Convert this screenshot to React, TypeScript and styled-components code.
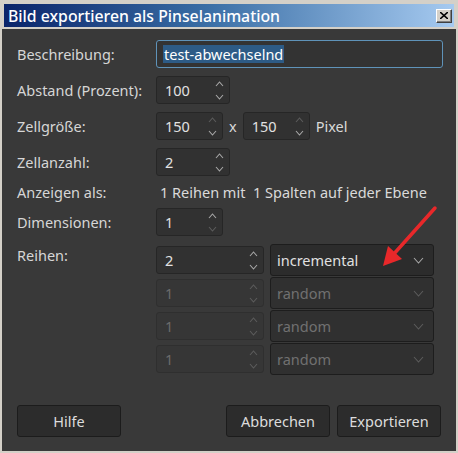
import styled, { createGlobalStyle } from 'styled-components';

const GlobalStyle = createGlobalStyle`
  html, body {
    margin: 0;
    padding: 0;
    background: #d4d0c8;
  }
  body {
    font-family: "Noto Sans", "Open Sans", sans-serif;
  }
`;

const Window = styled.div`
  position: relative;
  width: 458px;
  height: 453px;
  box-sizing: border-box;
  background: #d4d0c8;
  padding: 3px 2px 2px;
  display: flex;
  flex-direction: column;
`;

const TitleBar = styled.div`
  height: 23px;
  margin: 1px 2px 0;
  background: linear-gradient(to right, #0a246a 0%, #3a6ea5 45%, #a6caf0 100%);
  display: flex;
  align-items: center;
  justify-content: space-between;
  padding: 0 2px 0 4px;
`;

const Title = styled.span`
  color: #ffffff;
  font-size: 15.8px;
  font-weight: 500;
`;

const CloseButton = styled.div`
  width: 16px;
  height: 14px;
  box-sizing: border-box;
  background: #d4d0c8;
  border: 1px solid;
  border-color: #ffffff #404040 #404040 #ffffff;
  box-shadow: inset -1px -1px 0 #808080;
  display: flex;
  align-items: center;
  justify-content: center;
`;

const Body = styled.div`
  flex: 1;
  margin-top: 2px;
  background: #393939;
  display: flex;
  flex-direction: column;
  padding: 11px 15px 14px 15px;
  color: #dadada;
  font-size: 14.5px;
`;

const Form = styled.div`
  display: grid;
  grid-template-columns: 139px 1fr;
  row-gap: 8px;
  align-items: center;
`;

const Label = styled.div<{ $top?: boolean; $tight?: boolean }>`
  color: #d6d6d6;
  align-self: ${({ $top }) => ($top ? 'start' : 'center')};
  padding-top: ${({ $top }) => ($top ? '1px' : '0')};
  line-height: ${({ $tight }) => ($tight ? '16px' : 'normal')};
  white-space: nowrap;
`;

const Line = styled.div`
  display: flex;
  align-items: center;
  gap: 6px;
`;

const InfoText = styled.div`
  line-height: 16px;
  padding-left: 4px;
  white-space: pre;
`;

const TextInput = styled.div`
  height: 28px;
  box-sizing: border-box;
  width: 287px;
  border: 1px solid #5f93b9;
  border-radius: 3px;
  background: #333333;
  display: flex;
  align-items: center;
  padding-left: 6px;
`;

const Selected = styled.span`
  background: #2d5b86;
  color: #ffffff;
  padding: 0 1px;
  line-height: 18px;
`;

const Spin = styled.div<{ $w: number; $disabled?: boolean }>`
  width: ${({ $w }) => $w}px;
  height: 28px;
  box-sizing: border-box;
  border: 1px solid ${({ $disabled }) => ($disabled ? '#2f2f2f' : '#262626')};
  border-radius: 3px;
  background: ${({ $disabled }) => ($disabled ? '#363636' : '#313131')};
  color: ${({ $disabled }) => ($disabled ? '#6c6c6c' : '#e2e2e2')};
  display: flex;
  align-items: center;
  justify-content: space-between;
  padding: 0 5px 0 8px;
`;

const Arrows = styled.div`
  display: flex;
  flex-direction: column;
  gap: 7px;
`;

const Combo = styled.div<{ $disabled?: boolean }>`
  width: 164px;
  height: 32px;
  box-sizing: border-box;
  border: 1px solid #1d1d1d;
  border-radius: 3px;
  background: ${({ $disabled }) => ($disabled ? '#303030' : '#2c2c2c')};
  color: ${({ $disabled }) => ($disabled ? '#707070' : '#e0e0e0')};
  display: flex;
  align-items: center;
  justify-content: space-between;
  padding: 0 9px 0 6px;
`;

const RowsList = styled.div`
  display: flex;
  flex-direction: column;
  gap: 1px;
`;

const RowLine = styled.div`
  display: flex;
  align-items: center;
  gap: 6px;
`;

const Footer = styled.div`
  margin-top: auto;
  display: flex;
  gap: 7px;
`;

const Button = styled.div`
  width: 104px;
  height: 32px;
  box-sizing: border-box;
  background: #2c2c2c;
  border: 1px solid #1c1c1c;
  border-radius: 3px;
  color: #dcdcdc;
  display: flex;
  align-items: center;
  justify-content: center;
`;

const Spacer = styled.div`
  flex: 1;
`;

const Overlay = styled.svg`
  position: absolute;
  left: 0;
  top: 0;
  pointer-events: none;
`;

function Chevron({ up, dim, w = 7 }: { up?: boolean; dim?: boolean; w?: number }) {
  const h = Math.round(w * 0.55);
  return (
    <svg width={w + 2} height={h + 2} viewBox={`-1 -1 ${w + 2} ${h + 2}`}>
      <path
        d={up ? `M0 ${h} L${w / 2} 0 L${w} ${h}` : `M0 0 L${w / 2} ${h} L${w} 0`}
        fill="none"
        stroke={dim ? '#5c5c5c' : '#a8a8a8'}
        strokeWidth="1.1"
      />
    </svg>
  );
}

function SpinBox({
  value,
  width,
  disabled,
  upDim,
  downDim,
}: {
  value: string;
  width: number;
  disabled?: boolean;
  upDim?: boolean;
  downDim?: boolean;
}) {
  return (
    <Spin $w={width} $disabled={disabled}>
      <span>{value}</span>
      <Arrows>
        <Chevron up dim={disabled || upDim} />
        <Chevron dim={disabled || downDim} />
      </Arrows>
    </Spin>
  );
}

function ComboBox({ value, disabled }: { value: string; disabled?: boolean }) {
  return (
    <Combo $disabled={disabled}>
      <span>{value}</span>
      <Chevron w={9} dim={disabled} />
    </Combo>
  );
}

export default function App() {
  return (
    <Window>
      <GlobalStyle />
      <TitleBar>
        <Title>Bild exportieren als Pinselanimation</Title>
        <CloseButton>
          <svg width="8" height="7" viewBox="0 0 8 7">
            <path d="M0 0 L8 7 M8 0 L0 7" stroke="#000" strokeWidth="1.6" />
          </svg>
        </CloseButton>
      </TitleBar>
      <Body>
        <Form>
          <Label>Beschreibung:</Label>
          <TextInput>
            <Selected>test-abwechselnd</Selected>
          </TextInput>

          <Label>Abstand (Prozent):</Label>
          <Line>
            <SpinBox value="100" width={74} />
          </Line>

          <Label>Zellgröße:</Label>
          <Line>
            <SpinBox value="150" width={67} upDim />
            <span>x</span>
            <SpinBox value="150" width={67} upDim />
            <span>Pixel</span>
          </Line>

          <Label>Zellanzahl:</Label>
          <Line>
            <SpinBox value="2" width={74} />
          </Line>

          <Label $tight>Anzeigen als:</Label>
          <InfoText>1 Reihen mit  1 Spalten auf jeder Ebene</InfoText>

          <Label>Dimensionen:</Label>
          <Line>
            <SpinBox value="1" width={67} downDim />
          </Line>

          <Label $top>Reihen:</Label>
          <RowsList>
            <RowLine>
              <SpinBox value="2" width={108} />
              <ComboBox value="incremental" />
            </RowLine>
            <RowLine>
              <SpinBox value="1" width={108} disabled />
              <ComboBox value="random" disabled />
            </RowLine>
            <RowLine>
              <SpinBox value="1" width={108} disabled />
              <ComboBox value="random" disabled />
            </RowLine>
            <RowLine>
              <SpinBox value="1" width={108} disabled />
              <ComboBox value="random" disabled />
            </RowLine>
          </RowsList>
        </Form>
        <Footer>
          <Button>Hilfe</Button>
          <Spacer />
          <Button>Abbrechen</Button>
          <Button>Exportieren</Button>
        </Footer>
      </Body>
      <Overlay width="458" height="453" viewBox="0 0 458 453">
        <line x1="435" y1="208" x2="392" y2="256" stroke="#e8282a" strokeWidth="3.5" strokeLinecap="round" />
        <path d="M383 266 L388 246 L402 259 Z" fill="#e8282a" />
      </Overlay>
    </Window>
  );
}
